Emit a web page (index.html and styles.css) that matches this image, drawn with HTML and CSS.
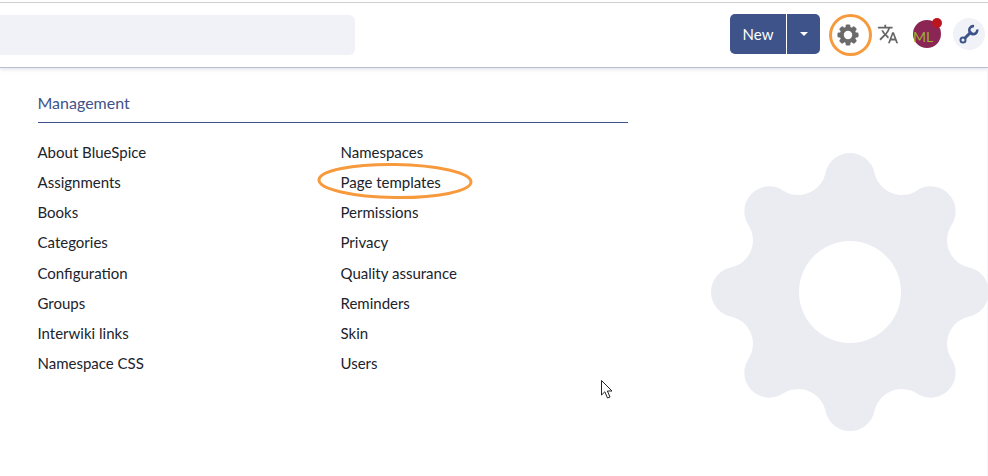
FILE: index.html
```html
<!DOCTYPE html>
<html lang="en">
<head>
<meta charset="utf-8">
<title>Management</title>
<link rel="stylesheet" href="styles.css">
</head>
<body>
<header class="topbar">
  <div class="search"></div>
  <div class="actions">
    <div class="new-btn"><span class="new-label">New</span><span class="new-caret"><span class="caret"></span></span></div>
    <span class="icon-gear">
      <svg width="22" height="22" viewBox="-12 -12 24 24"><g fill="#6b6b6b">
        <rect x="-2.600" y="-11.500" width="5.200" height="23" rx="1.400"/>
        <rect x="-2.600" y="-11.500" width="5.200" height="23" rx="1.400" transform="rotate(45)"/>
        <rect x="-2.600" y="-11.500" width="5.200" height="23" rx="1.400" transform="rotate(90)"/>
        <rect x="-2.600" y="-11.500" width="5.200" height="23" rx="1.400" transform="rotate(135)"/>
        <circle r="9"/></g><circle r="4.600" fill="#fff"/></svg>
      <span class="ring"></span>
    </span>
    <svg class="icon-lang" width="22" height="22" viewBox="0 0 24 24"><path fill="#666" d="M12.87 15.07l-2.54-2.51.03-.03c1.74-1.94 2.98-4.17 3.8-6.53H17V4h-7V2H8v2H1v1.99h11.17C11.5 7.92 10.44 9.75 9 11.35 8.07 10.32 7.3 9.19 6.69 8h-2c.73 1.63 1.73 3.17 2.98 4.56l-5.09 5.02L4 19l5-5 3.11 3.11.76-2.04zM18.5 10h-2L12 22h2l1.12-3h4.75L21 22h2l-4.5-12zm-2.62 7l1.62-4.33L19.12 17h-3.24z"/></svg>
    <span class="avatar">ML<span class="dot"></span></span>
    <span class="tool">
      <svg width="20" height="20" viewBox="0 0 20 20"><g fill="none" stroke="#3e5389"><circle cx="4" cy="16" r="2.500" stroke-width="2"/><path stroke-width="3" d="M6 14L12.500 7.500"/><path stroke-width="2.600" d="M15 2.200A4 4 0 1 0 18.200 5.400"/></g></svg>
    </span>
  </div>
</header>
<main class="content">
  <section class="menu">
    <h2 class="menu-title">Management</h2>
    <div class="links">
      <ul class="col">
        <li>About BlueSpice</li>
        <li>Assignments</li>
        <li>Books</li>
        <li>Categories</li>
        <li>Configuration</li>
        <li>Groups</li>
        <li>Interwiki links</li>
        <li>Namespace CSS</li>
      </ul>
      <ul class="col">
        <li>Namespaces</li>
        <li class="marked">Page templates
          <svg class="ellipse" width="160" height="40" viewBox="0 0 160 40"><ellipse cx="80" cy="20" rx="76" ry="16.500" fill="none" stroke="#f79a3e" stroke-width="3" transform="rotate(0.800 80 20)"/></svg>
        </li>
        <li>Permissions</li>
        <li>Privacy</li>
        <li>Quality assurance</li>
        <li>Reminders</li>
        <li>Skin</li>
        <li>Users</li>
      </ul>
    </div>
  </section>
  <svg class="watermark" width="278" height="278" viewBox="-139 -139 278 278"><path fill="#ebecf2" fill-rule="evenodd" d="M-24.450 -119.200A25 25 0 0 1 24.450 -119.200A27.900 27.900 0 0 0 67 -101.600A25 25 0 0 1 101.600 -67A27.900 27.900 0 0 0 119.200 -24.450A25 25 0 0 1 119.200 24.450A27.900 27.900 0 0 0 101.600 67A25 25 0 0 1 67 101.600A27.900 27.900 0 0 0 24.450 119.200A25 25 0 0 1 -24.450 119.200A27.900 27.900 0 0 0 -67 101.600A25 25 0 0 1 -101.600 67A27.900 27.900 0 0 0 -119.200 24.450A25 25 0 0 1 -119.200 -24.450A27.900 27.900 0 0 0 -101.600 -67A25 25 0 0 1 -67 -101.600A27.900 27.900 0 0 0 -24.450 -119.200ZM-51 0A51 51 0 0 0 51 0A51 51 0 0 0 -51 0Z"/></svg>
  <svg class="cursor" width="14" height="21" viewBox="0 0 14 21"><path fill="#fff" stroke="#222" stroke-width="1" d="M1.500 1.500V16L4.800 12.800L7.500 19L10 18L7.400 12H12Z"/></svg>
</main>
</body>
</html>
```
FILE: styles.css
```css
* { box-sizing: border-box; }
html, body { margin: 0; padding: 0; background: #fff; }
body {
  width: 988px;
  height: 476px;
  overflow: hidden;
  padding-top: 2px;
  font-family: Lato, "Open Sans", sans-serif;
  font-size: 15px;
  color: #20232b;
}
.topbar {
  display: flex;
  justify-content: space-between;
  align-items: flex-start;
  height: 66px;
  padding: 11px 3px 0 0;
  border-top: 1px solid #cfcfd1;
  border-bottom: 1px solid #b9bdd1;
  box-shadow: 0 2px 3px rgba(185, 189, 209, .35);
}
.search {
  width: 355px;
  height: 40px;
  margin-top: 1px;
  background: #f0f2f7;
  border-radius: 0 6px 6px 0;
}
.actions { display: flex; align-items: center; height: 40px; }
.new-btn {
  display: flex;
  width: 90px;
  height: 40px;
  background: #3e5389;
  border-radius: 5px;
  color: #fff;
}
.new-label {
  width: 57px;
  line-height: 40px;
  text-align: center;
  border-right: 1px solid #fff;
}
.new-caret { flex: 1; display: flex; align-items: center; justify-content: center; }
.caret {
  border-left: 4px solid transparent;
  border-right: 4px solid transparent;
  border-top: 4px solid #fff;
}
.icon-gear {
  position: relative;
  display: flex;
  margin-left: 17px;
  margin-top: 1px;
}
.ring {
  position: absolute;
  left: -8px;
  top: -10px;
  width: 43px;
  height: 42px;
  border: 3px solid #f79a3e;
  border-radius: 50%;
}
.icon-lang { margin-left: 18px; }
.avatar {
  position: relative;
  width: 28px;
  height: 28px;
  margin-left: 14px;
  border-radius: 50%;
  background: #8a2554;
  color: #9cb02e;
  font-size: 14px;
  line-height: 34px;
}
.dot {
  position: absolute;
  right: -1px;
  top: -2px;
  width: 10px;
  height: 10px;
  border-radius: 50%;
  background: #bb1520;
}
.tool {
  display: flex;
  align-items: center;
  justify-content: center;
  width: 32px;
  height: 32px;
  margin-left: 12px;
  border-radius: 50%;
  background: #f0f2f7;
}
.content {
  position: relative;
  display: flex;
  justify-content: space-between;
  align-items: flex-start;
  height: 408px;
  padding-left: 37.500px;
  border-right: 1px solid #f4f5f9;
}
.menu { flex: none; width: 590.500px; padding-top: 25px; }
.menu-title {
  margin: 0 0 14px;
  padding-bottom: 9px;
  height: 30px;
  border-bottom: 1px solid #3e5389;
  font-size: 16px;
  font-weight: 400;
  line-height: 20px;
  color: #3e5389;
}
.links { display: flex; }
.col {
  flex: none;
  width: 303px;
  margin: 0;
  padding: 0;
  list-style: none;
}
.col li { height: 30.170px; line-height: 30px; position: relative; }
.ellipse { position: absolute; left: -26px; top: -6px; }
.watermark { flex: none; margin: 85px -2px 0 0; }
.cursor { position: absolute; left: 600px; top: 311px; }
```
